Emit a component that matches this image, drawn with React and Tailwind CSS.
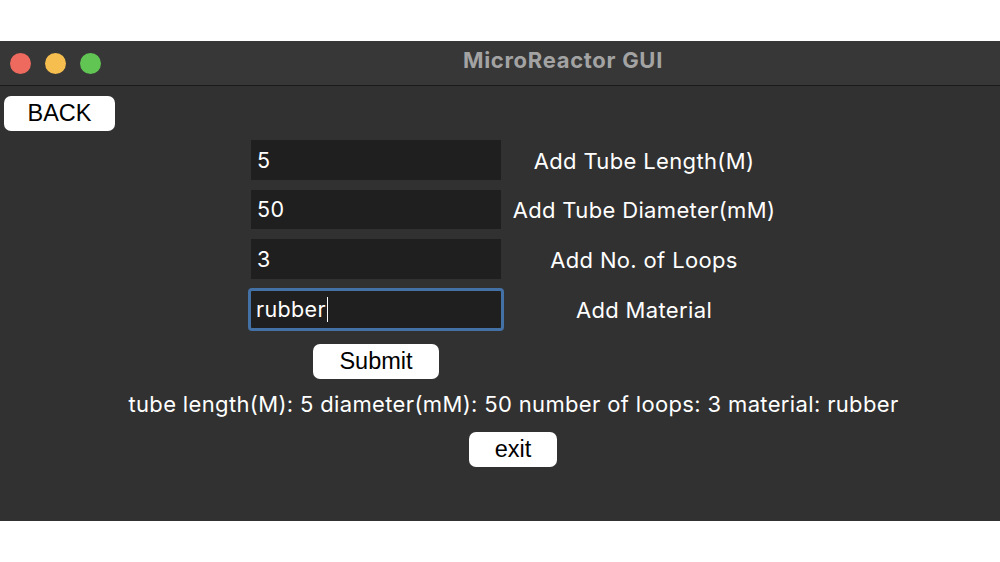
import React from 'react'

const fields = [
  { value: '5', label: 'Add Tube Length(M)' },
  { value: '50', label: 'Add Tube Diameter(mM)' },
  { value: '3', label: 'Add No. of Loops' },
]

export default function App() {
  return (
    <div className="w-[1000px] h-[562px] bg-white pt-[41px] font-['Inter','Liberation_Sans',sans-serif] overflow-hidden">
      <div className="h-[480px] bg-[#313131] rounded-tl-[10px] flex flex-col">
        {/* title bar */}
        <div className="h-[45px] bg-[#373737] border-b border-[#1a1a1a] flex items-center relative">
          <div className="flex gap-[14px] pl-[10px]">
            <span className="w-[21px] h-[21px] rounded-full bg-[#ee6a5f]" />
            <span className="w-[21px] h-[21px] rounded-full bg-[#f5be4f]" />
            <span className="w-[21px] h-[21px] rounded-full bg-[#61c554]" />
          </div>
          <div className="absolute left-[463px] top-[3px] text-[22px] font-bold text-[#a3a3a3] tracking-[0.7px]">
            MicroReactor GUI
          </div>
        </div>

        {/* body */}
        <div className="flex flex-col">
          <button className="mt-[10px] ml-[4px] w-[111px] h-[35px] bg-white rounded-[7px] text-black text-[23.5px] font-['Liberation_Sans',sans-serif]">
            BACK
          </button>

          <div className="mt-[9px] flex flex-col gap-[10px] tracking-[0.35px]">
            {fields.map((f) => (
              <div key={f.label} className="flex items-center h-[39.5px]">
                <div className="ml-[251px] w-[250px] h-full bg-[#1f1f1f] text-white text-[21.5px] pl-[6px] flex items-center">
                  {f.value}
                </div>
                <div className="w-[286px] text-center text-white text-[22px] pt-[3px]">{f.label}</div>
              </div>
            ))}
            <div className="flex items-center h-[43px] -mt-[1px]">
              <div className="ml-[248px] w-[256px] h-full bg-[#1f1f1f] border-[3px] border-[#4371a6] rounded-[4px] text-white text-[21.5px] pl-[5px] flex items-center">
                rubber<span className="inline-block w-[1.5px] h-[25px] bg-white ml-[1px]" />
              </div>
              <div className="w-[280px] text-center text-white text-[22px] pt-[3px]">Add Material</div>
            </div>
          </div>

          <button className="mt-[13px] ml-[313px] w-[126px] h-[35px] bg-white rounded-[7px] text-black text-[23.5px] font-['Liberation_Sans',sans-serif]">
            Submit
          </button>

          <div className="mt-[12px] h-[28px] flex items-center justify-center pl-[27px] text-white text-[22px] tracking-[0.35px]">
            tube length(M): 5 diameter(mM): 50 number of loops: 3 material: rubber
          </div>

          <button className="mt-[13px] ml-[469px] w-[88px] h-[35px] bg-white rounded-[7px] text-black text-[23.5px] font-['Liberation_Sans',sans-serif]">
            exit
          </button>
        </div>
      </div>
    </div>
  )
}
